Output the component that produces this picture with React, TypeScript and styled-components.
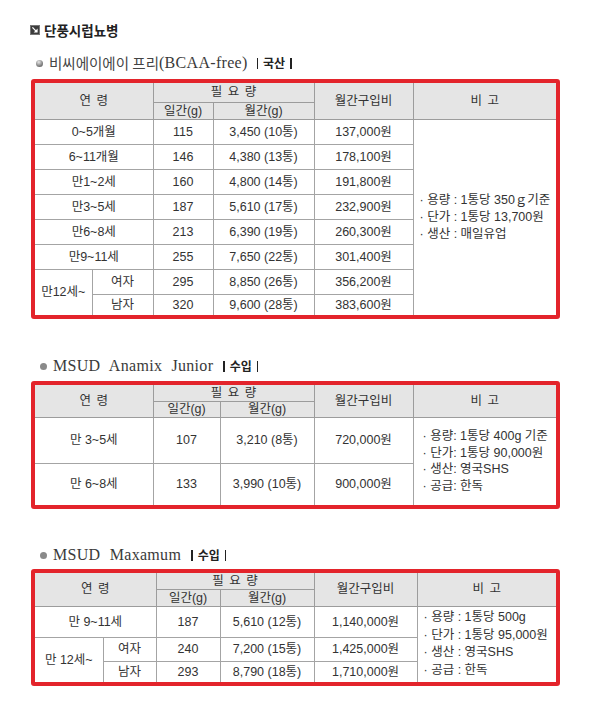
import React from 'react';
import styled, { createGlobalStyle } from 'styled-components';

const Global = createGlobalStyle`
  html, body { margin: 0; padding: 0; background: #fff; }
  body { font-family: "Liberation Sans", "Noto Sans CJK KR", sans-serif; color: #333; }
`;

const Page = styled.div`
  width: 591px;
  height: 720px;
  overflow: hidden;
  box-sizing: border-box;
  padding-left: 31px;
  display: flex;
  flex-direction: column;
  background: #fff;
`;

const Title = styled.h1`
  margin: 21px 0 0 -1px;
  height: 18px;
  display: flex;
  align-items: center;
  gap: 4px;
  font: 700 13.5px/18px "Noto Sans CJK KR", sans-serif;
  color: #222;
`;

const Sub = styled.div<{ $top: number; $indent: number }>`
  margin: ${(p) => p.$top}px 0 0 ${(p) => p.$indent}px;
  height: 20px;
  display: flex;
  align-items: center;
  font: 400 16px/20px "Liberation Serif", "Noto Sans CJK KR", serif;
  color: #3a3a3a;
  letter-spacing: 0.3px;
  word-spacing: 5px;
  white-space: nowrap;
`;

const Bullet = styled.span<{ $shaded?: boolean }>`
  width: 7px;
  height: 7px;
  border-radius: 50%;
  margin-right: 6px;
  flex: none;
  background: ${(p) =>
    p.$shaded
      ? 'radial-gradient(circle at 40% 30%, #e8e8e8 0%, #9a9a9a 45%, #444 100%)'
      : '#8a8a8a'};
`;

const Kr = styled.span`
  font-family: "Noto Sans CJK KR", sans-serif;
  font-size: 14.5px;
  font-weight: 400;
  letter-spacing: 0;
  word-spacing: 0;
  color: #444;
`;

const Tag = styled.span<{ $gap: number }>`
  margin-left: ${(p) => p.$gap}px;
  font: 700 12px/16px "Noto Sans CJK KR", sans-serif;
  color: #222;
  letter-spacing: 0;
  word-spacing: 0;
  display: inline-flex;
  align-items: center;
  gap: 5px;
`;

const Bar = styled.span`
  display: inline-block;
  width: 1.5px;
  height: 11px;
  background: #222;
`;

const Frame = styled.div<{ $top: number }>`
  margin-top: ${(p) => p.$top}px;
  width: 521px;
  border: 4px solid #e3242b;
  border-radius: 3px;
  overflow: hidden;
  flex: none;
`;

const Table = styled.table`
  width: 521px;
  border-collapse: collapse;
  border-style: hidden;
  table-layout: fixed;
  font-family: "Liberation Sans", "Noto Sans CJK KR", sans-serif;
  font-size: 12.5px;
  color: #333;
`;

const Col = styled.col<{ $w: number }>`
  width: ${(p) => p.$w}px;
`;

const Row = styled.tr<{ $h: number }>`
  height: ${(p) => p.$h}px;
`;

const Th = styled.th`
  background: #e5e5e5;
  border: 1px solid #9c9c9c;
  font-weight: 400;
  font-size: 12.5px;
  color: #333;
  padding: 0;
  line-height: 14px;
  text-align: center;
  word-spacing: 2px;
  white-space: nowrap;
`;

const Td = styled.td`
  border: 1px solid #a4a4a4;
  padding: 0;
  line-height: 14px;
  text-align: center;
  white-space: nowrap;
`;

const Note = styled.td<{ $pad: number; $lh: number }>`
  border: 1px solid #a4a4a4;
  padding: 0 0 0 ${(p) => p.$pad}px;
  text-align: left;
  vertical-align: middle;
  line-height: ${(p) => p.$lh}px;
  white-space: nowrap;
  overflow: hidden;
`;

const Icon = () => (
  <svg width="10" height="10" viewBox="0 0 10 10" style={{ flex: 'none' }}>
    <rect x="0.5" y="0.5" width="9" height="9" fill="#3c3c3c" stroke="#777" />
    <path d="M2.4 2.4 L6.6 6.6" stroke="#fff" strokeWidth="1.3" />
    <path d="M7.6 3.6 V7.6 H3.6 Z" fill="#fff" />
  </svg>
);

type DataRow = [string, string, string, string];

const t1: DataRow[] = [
  ['0~5개월', '115', '3,450 (10통)', '137,000원'],
  ['6~11개월', '146', '4,380 (13통)', '178,100원'],
  ['만1~2세', '160', '4,800 (14통)', '191,800원'],
  ['만3~5세', '187', '5,610 (17통)', '232,900원'],
  ['만6~8세', '213', '6,390 (19통)', '260,300원'],
  ['만9~11세', '255', '7,650 (22통)', '301,400원'],
];

const Header = ({ h1, h2 }: { h1: number; h2: number }) => (
  <>
    <Row $h={h1}>
      <Th colSpan={2} rowSpan={2}>연 령</Th>
      <Th colSpan={2}>필 요 량</Th>
      <Th rowSpan={2}>월간구입비</Th>
      <Th rowSpan={2}>비 고</Th>
    </Row>
    <Row $h={h2}>
      <Th>일간(g)</Th>
      <Th>월간(g)</Th>
    </Row>
  </>
);

export default function App() {
  return (
    <>
      <Global />
      <Page>
        <Title>
          <Icon />
          단풍시럽뇨병
        </Title>

        <Sub $top={14} $indent={5}>
          <Bullet $shaded />
          <Kr>비씨에이에이 프리</Kr>(BCAA-free)
          <Tag $gap={9}>
            <Bar />국산<Bar />
          </Tag>
        </Sub>
        <Frame $top={6}>
          <Table>
            <colgroup>
              <Col $w={57} />
              <Col $w={61} />
              <Col $w={60} />
              <Col $w={101} />
              <Col $w={99} />
              <Col $w={143} />
            </colgroup>
            <tbody>
              <Header h1={19} h2={17} />
              {t1.map((r, i) => (
                <Row $h={25} key={r[0]}>
                  <Td colSpan={2}>{r[0]}</Td>
                  <Td>{r[1]}</Td>
                  <Td>{r[2]}</Td>
                  <Td>{r[3]}</Td>
                  {i === 0 && (
                    <Note rowSpan={8} $pad={6} $lh={17}>
                      · 용량 : 1통당 350ｇ기준
                      <br />· 단가 : 1통당 13,700원
                      <br />· 생산 : 매일유업
                    </Note>
                  )}
                </Row>
              ))}
              <Row $h={25}>
                <Td rowSpan={2}>만12세~</Td>
                <Td>여자</Td>
                <Td>295</Td>
                <Td>8,850 (26통)</Td>
                <Td>356,200원</Td>
              </Row>
              <Row $h={21}>
                <Td>남자</Td>
                <Td>320</Td>
                <Td>9,600 (28통)</Td>
                <Td>383,600원</Td>
              </Row>
            </tbody>
          </Table>
        </Frame>

        <Sub $top={37} $indent={9}>
          <Bullet />
          MSUD Anamix Junior
          <Tag $gap={10}>
            <Bar />수입<Bar />
          </Tag>
        </Sub>
        <Frame $top={5}>
          <Table>
            <colgroup>
              <Col $w={57} />
              <Col $w={61} />
              <Col $w={67} />
              <Col $w={94} />
              <Col $w={99} />
              <Col $w={143} />
            </colgroup>
            <tbody>
              <Header h1={16} h2={16} />
              <Row $h={46}>
                <Td colSpan={2}>만 3~5세</Td>
                <Td>107</Td>
                <Td>3,210 (8통)</Td>
                <Td>720,000원</Td>
                <Note rowSpan={2} $pad={9} $lh={16.5}>
                  · 용량: 1통당 400g 기준
                  <br />· 단가: 1통당 90,000원
                  <br />· 생산: 영국SHS
                  <br />· 공급: 한독
                </Note>
              </Row>
              <Row $h={42}>
                <Td colSpan={2}>만 6~8세</Td>
                <Td>133</Td>
                <Td>3,990 (10통)</Td>
                <Td>900,000원</Td>
              </Row>
            </tbody>
          </Table>
        </Frame>

        <Sub $top={36} $indent={9}>
          <Bullet />
          MSUD Maxamum
          <Tag $gap={10}>
            <Bar />수입<Bar />
          </Tag>
        </Sub>
        <Frame $top={4}>
          <Table>
            <colgroup>
              <Col $w={68} />
              <Col $w={53} />
              <Col $w={64} />
              <Col $w={94} />
              <Col $w={103} />
              <Col $w={139} />
            </colgroup>
            <tbody>
              <Header h1={16} h2={17} />
              <Row $h={31}>
                <Td colSpan={2}>만 9~11세</Td>
                <Td>187</Td>
                <Td>5,610 (12통)</Td>
                <Td>1,140,000원</Td>
                <Note rowSpan={3} $pad={6} $lh={17.5}>
                  · 용량 : 1통당 500g
                  <br />· 단가 : 1통당 95,000원
                  <br />· 생산 : 영국SHS
                  <br />· 공급 : 한독
                </Note>
              </Row>
              <Row $h={24}>
                <Td rowSpan={2}>만 12세~</Td>
                <Td>여자</Td>
                <Td>240</Td>
                <Td>7,200 (15통)</Td>
                <Td>1,425,000원</Td>
              </Row>
              <Row $h={21}>
                <Td>남자</Td>
                <Td>293</Td>
                <Td>8,790 (18통)</Td>
                <Td>1,710,000원</Td>
              </Row>
            </tbody>
          </Table>
        </Frame>
      </Page>
    </>
  );
}
